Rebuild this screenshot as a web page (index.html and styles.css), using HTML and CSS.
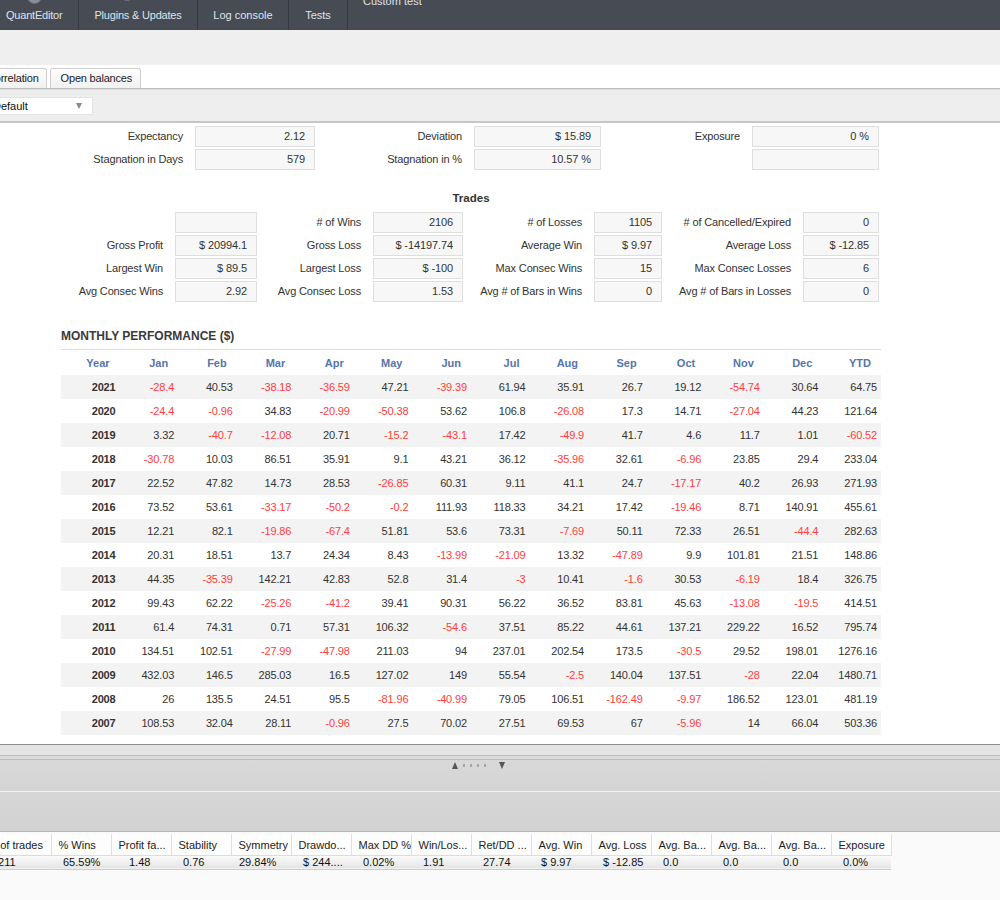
FILE: index.html
```html
<!DOCTYPE html>
<html>
<head>
<meta charset="utf-8">
<link rel="stylesheet" href="styles.css">
</head>
<body>
<div class="nav">
  <div class="navtab t1"><span class="nicon"></span>QuantEditor</div>
  <div class="navtab t2"><span class="nicon small"></span>Plugins &amp; Updates</div>
  <div class="navtab t3">Log console</div>
  <div class="navtab t4">Tests</div>
  <div class="navtab t5">Custom test</div>
</div>
<div class="band"></div>
<div class="tabstrip">
  <div class="tab tcor">Correlation</div>
  <div class="tab">Open balances</div>
</div>
<div class="toolbar">
  <div class="select"><span>Default</span><span class="arrow"></span></div>
</div>
<div class="content">
  <div class="stats">
    <div class="lbl">Expectancy</div><div class="box">2.12</div>
    <div class="lbl">Deviation</div><div class="box">$ 15.89</div>
    <div class="lbl">Exposure</div><div class="box">0 %</div>
    <div class="lbl">Stagnation in Days</div><div class="box">579</div>
    <div class="lbl">Stagnation in %</div><div class="box">10.57 %</div>
    <div class="lbl"></div><div class="box"></div>
  </div>
  <div class="trades-title">Trades</div>
  <div class="trades">
    <div class="lbl"></div><div class="box"></div>
    <div class="lbl"># of Wins</div><div class="box">2106</div>
    <div class="lbl"># of Losses</div><div class="box">1105</div>
    <div class="lbl"># of Cancelled/Expired</div><div class="box">0</div>
    <div class="lbl">Gross Profit</div><div class="box">$ 20994.1</div>
    <div class="lbl">Gross Loss</div><div class="box">$ -14197.74</div>
    <div class="lbl">Average Win</div><div class="box">$ 9.97</div>
    <div class="lbl">Average Loss</div><div class="box">$ -12.85</div>
    <div class="lbl">Largest Win</div><div class="box">$ 89.5</div>
    <div class="lbl">Largest Loss</div><div class="box">$ -100</div>
    <div class="lbl">Max Consec Wins</div><div class="box">15</div>
    <div class="lbl">Max Consec Losses</div><div class="box">6</div>
    <div class="lbl">Avg Consec Wins</div><div class="box">2.92</div>
    <div class="lbl">Avg Consec Loss</div><div class="box">1.53</div>
    <div class="lbl">Avg # of Bars in Wins</div><div class="box">0</div>
    <div class="lbl">Avg # of Bars in Losses</div><div class="box">0</div>
  </div>
  <div class="monthly">
    <div class="mtitle">MONTHLY PERFORMANCE ($)</div>
    <table class="mp">
      <thead>
        <tr><th>Year</th><th>Jan</th><th>Feb</th><th>Mar</th><th>Apr</th><th>May</th><th>Jun</th><th>Jul</th><th>Aug</th><th>Sep</th><th>Oct</th><th>Nov</th><th>Dec</th><th>YTD</th></tr>
      </thead>
      <tbody>
        <tr><td class="y">2021</td><td class="n">-28.4</td><td>40.53</td><td class="n">-38.18</td><td class="n">-36.59</td><td>47.21</td><td class="n">-39.39</td><td>61.94</td><td>35.91</td><td>26.7</td><td>19.12</td><td class="n">-54.74</td><td>30.64</td><td>64.75</td></tr>
        <tr><td class="y">2020</td><td class="n">-24.4</td><td class="n">-0.96</td><td>34.83</td><td class="n">-20.99</td><td class="n">-50.38</td><td>53.62</td><td>106.8</td><td class="n">-26.08</td><td>17.3</td><td>14.71</td><td class="n">-27.04</td><td>44.23</td><td>121.64</td></tr>
        <tr><td class="y">2019</td><td>3.32</td><td class="n">-40.7</td><td class="n">-12.08</td><td>20.71</td><td class="n">-15.2</td><td class="n">-43.1</td><td>17.42</td><td class="n">-49.9</td><td>41.7</td><td>4.6</td><td>11.7</td><td>1.01</td><td class="n">-60.52</td></tr>
        <tr><td class="y">2018</td><td class="n">-30.78</td><td>10.03</td><td>86.51</td><td>35.91</td><td>9.1</td><td>43.21</td><td>36.12</td><td class="n">-35.96</td><td>32.61</td><td class="n">-6.96</td><td>23.85</td><td>29.4</td><td>233.04</td></tr>
        <tr><td class="y">2017</td><td>22.52</td><td>47.82</td><td>14.73</td><td>28.53</td><td class="n">-26.85</td><td>60.31</td><td>9.11</td><td>41.1</td><td>24.7</td><td class="n">-17.17</td><td>40.2</td><td>26.93</td><td>271.93</td></tr>
        <tr><td class="y">2016</td><td>73.52</td><td>53.61</td><td class="n">-33.17</td><td class="n">-50.2</td><td class="n">-0.2</td><td>111.93</td><td>118.33</td><td>34.21</td><td>17.42</td><td class="n">-19.46</td><td>8.71</td><td>140.91</td><td>455.61</td></tr>
        <tr><td class="y">2015</td><td>12.21</td><td>82.1</td><td class="n">-19.86</td><td class="n">-67.4</td><td>51.81</td><td>53.6</td><td>73.31</td><td class="n">-7.69</td><td>50.11</td><td>72.33</td><td>26.51</td><td class="n">-44.4</td><td>282.63</td></tr>
        <tr><td class="y">2014</td><td>20.31</td><td>18.51</td><td>13.7</td><td>24.34</td><td>8.43</td><td class="n">-13.99</td><td class="n">-21.09</td><td>13.32</td><td class="n">-47.89</td><td>9.9</td><td>101.81</td><td>21.51</td><td>148.86</td></tr>
        <tr><td class="y">2013</td><td>44.35</td><td class="n">-35.39</td><td>142.21</td><td>42.83</td><td>52.8</td><td>31.4</td><td class="n">-3</td><td>10.41</td><td class="n">-1.6</td><td>30.53</td><td class="n">-6.19</td><td>18.4</td><td>326.75</td></tr>
        <tr><td class="y">2012</td><td>99.43</td><td>62.22</td><td class="n">-25.26</td><td class="n">-41.2</td><td>39.41</td><td>90.31</td><td>56.22</td><td>36.52</td><td>83.81</td><td>45.63</td><td class="n">-13.08</td><td class="n">-19.5</td><td>414.51</td></tr>
        <tr><td class="y">2011</td><td>61.4</td><td>74.31</td><td>0.71</td><td>57.31</td><td>106.32</td><td class="n">-54.6</td><td>37.51</td><td>85.22</td><td>44.61</td><td>137.21</td><td>229.22</td><td>16.52</td><td>795.74</td></tr>
        <tr><td class="y">2010</td><td>134.51</td><td>102.51</td><td class="n">-27.99</td><td class="n">-47.98</td><td>211.03</td><td>94</td><td>237.01</td><td>202.54</td><td>173.5</td><td class="n">-30.5</td><td>29.52</td><td>198.01</td><td>1276.16</td></tr>
        <tr><td class="y">2009</td><td>432.03</td><td>146.5</td><td>285.03</td><td>16.5</td><td>127.02</td><td>149</td><td>55.54</td><td class="n">-2.5</td><td>140.04</td><td>137.51</td><td class="n">-28</td><td>22.04</td><td>1480.71</td></tr>
        <tr><td class="y">2008</td><td>26</td><td>135.5</td><td>24.51</td><td>95.5</td><td class="n">-81.96</td><td class="n">-40.99</td><td>79.05</td><td>106.51</td><td class="n">-162.49</td><td class="n">-9.97</td><td>186.52</td><td>123.01</td><td>481.19</td></tr>
        <tr><td class="y">2007</td><td>108.53</td><td>32.04</td><td>28.11</td><td class="n">-0.96</td><td>27.5</td><td>70.02</td><td>27.51</td><td>69.53</td><td>67</td><td class="n">-5.96</td><td>14</td><td>66.04</td><td>503.36</td></tr>
      </tbody>
    </table>
  </div>
</div>
<div class="split">
  <div class="sp-a"></div>
  <div class="sp-b"></div>
  <div class="sp-c">
    <div class="grip"><span class="up"></span><span class="dot"></span><span class="dot"></span><span class="dot"></span><span class="dot"></span><span class="down"></span></div>
  </div>
  <div class="sp-d"></div>
</div>
<div class="bottom">
  <table class="res">
    <thead>
      <tr><th class="c1"># of trades</th><th>% Wins</th><th>Profit fa...</th><th>Stability</th><th>Symmetry</th><th>Drawdo...</th><th>Max DD %</th><th>Win/Los...</th><th>Ret/DD ...</th><th>Avg. Win</th><th>Avg. Loss</th><th>Avg. Ba...</th><th>Avg. Ba...</th><th>Avg. Ba...</th><th>Exposure</th></tr>
    </thead>
    <tbody>
      <tr><td class="c1">3211</td><td>65.59%</td><td class="p18">1.48</td><td>0.76</td><td class="p8">29.84%</td><td>$ 244....</td><td>0.02%</td><td>1.91</td><td>27.74</td><td class="p9">$ 9.97</td><td>$ -12.85</td><td>0.0</td><td>0.0</td><td>0.0</td><td>0.0%</td></tr>
    </tbody>
  </table>
</div>
</body>
</html>
```

FILE: styles.css
```css
html, body {
  margin: 0;
  padding: 0;
}
body {
  width: 1000px;
  height: 900px;
  overflow: hidden;
  font-family: "Liberation Sans", Arial, sans-serif;
  font-size: 11px;
  color: #333;
  background: #fafafa;
}

/* top navigation */
.nav {
  height: 30px;
  display: flex;
  background: #474b54;
  color: #dfe3ea;
  overflow: hidden;
}
.navtab {
  position: relative;
  box-sizing: border-box;
  padding-top: 9px;
  line-height: 13px;
  text-align: center;
  border-right: 1px solid #363940;
  white-space: nowrap;
}
.t1 { width: 79px; text-align: left; padding-left: 6px; letter-spacing: -0.2px; }
.t2 { width: 119px; letter-spacing: -0.2px; }
.t3 { width: 91px; }
.t4 { width: 59px; }
.t5 { border-right: none; padding: 0 0 0 15px; margin-top: -5px; text-align: left; }
.nicon {
  position: absolute;
  left: 27px;
  top: -11px;
  width: 15px;
  height: 15px;
  border-radius: 50%;
  background: #8b8f96;
  border: 1px solid #6a6e75;
  box-sizing: border-box;
}
.nicon.small {
  left: 44px;
  top: -13px;
  width: 8px;
  height: 14px;
  border-radius: 3px;
  background: #777b82;
}

.band {
  height: 35px;
  background: #efefef;
}

/* tab strip */
.tabstrip {
  height: 23px;
  background: #fff;
  border-bottom: 1px solid #bdbdbd;
  display: flex;
  align-items: flex-end;
  gap: 3px;
  overflow: hidden;
}
.tab {
  height: 20px;
  box-sizing: border-box;
  line-height: 19px;
  padding: 0 8px 0 10px;
  border: 1px solid #cfcfcf;
  border-bottom: none;
  border-radius: 3px 3px 0 0;
  background: linear-gradient(#fdfdfd, #f1f1f1);
  color: #222;
  white-space: nowrap;
  letter-spacing: -0.2px;
}
.tcor {
  margin-left: -24px;
  padding-right: 7px;
}

/* toolbar */
.toolbar {
  box-sizing: border-box;
  padding-top: 7px;
  background: #eeeeee;
  border-top: 1px solid #dedede;
  border-bottom: 2px solid #c6c6c6;
  height: 34px;
}
.select {
  margin-left: -12px;
  width: 105px;
  height: 18px;
  box-sizing: border-box;
  background: #fff;
  border: 1px solid #e2e2e2;
  padding-left: 4px;
  line-height: 16px;
  color: #111;
  display: flex;
  align-items: center;
  justify-content: space-between;
  padding-right: 10px;
}
.arrow {
  width: 0;
  height: 0;
  border-left: 3px solid transparent;
  border-right: 3px solid transparent;
  border-top: 6px solid #8a8a8a;
}

/* content */
.content {
  height: 621px;
  background: #fff;
  padding-top: 3px;
  box-sizing: border-box;
  overflow: hidden;
}
.stats {
  display: grid;
  grid-template-columns: 183px 120px 135px 127px 127px 127px;
  column-gap: 12px;
  row-gap: 2px;
}
.trades {
  display: grid;
  grid-template-columns: 163px 82px 92px 90px 107px 68px 117px 76px;
  column-gap: 12px;
  row-gap: 2px;
}
.lbl {
  text-align: right;
  line-height: 21px;
  height: 21px;
  white-space: nowrap;
  letter-spacing: -0.15px;
}
.box {
  height: 21px;
  box-sizing: border-box;
  border: 1px solid #dedede;
  background: #f7f7f7;
  text-align: right;
  padding-right: 9px;
  line-height: 19px;
  white-space: nowrap;
  letter-spacing: -0.1px;
}
.trades-title {
  width: 942px;
  text-align: center;
  font-weight: bold;
  font-size: 11.5px;
  line-height: 14px;
  margin-top: 21px;
  margin-bottom: 7px;
  color: #333;
}

/* monthly */
.monthly {
  margin: 27px 0 0 61px;
  width: 820px;
}
.mtitle {
  font-weight: bold;
  font-size: 12px;
  line-height: 14px;
  color: #3a3a3a;
  padding-bottom: 6px;
  border-bottom: 1px solid #dcdcdc;
}
.mp {
  width: 820px;
  border-collapse: collapse;
  table-layout: fixed;
}
.mp th {
  height: 25px;
  padding: 0 10px 0 0;
  text-align: right;
  color: #5475ad;
  font-weight: bold;
}
.mp td {
  height: 24px;
  padding: 0 4px 0 0;
  text-align: right;
  white-space: nowrap;
  letter-spacing: -0.15px;
}
.mp tbody tr:nth-child(odd) td {
  background: #f3f3f3;
}
.mp td.y {
  font-weight: bold;
}
.mp td.n {
  color: #ff3d3d;
}

/* splitter */
.split {
  background: #fff;
}
.sp-a {
  height: 10px;
  background: #e4e4e4;
  border-top: 1px solid #8e8e8e;
  border-bottom: 1px solid #bdbdbd;
}
.sp-b {
  height: 3px;
  background: #dadada;
  border-bottom: 1px solid #bdbdbd;
}
.sp-c {
  height: 31px;
  background: linear-gradient(#d8d8d8, #d4d4d4);
  border-bottom: 1px solid #f4f4f4;
  display: flex;
  justify-content: center;
}
.grip {
  display: flex;
  align-items: center;
  height: 8px;
  margin-top: 1px;
  margin-left: -43px;
}
.grip .up {
  width: 0;
  height: 0;
  border-left: 3px solid transparent;
  border-right: 3px solid transparent;
  border-bottom: 7px solid #555;
  margin-right: 5px;
}
.grip .down {
  width: 0;
  height: 0;
  border-left: 3px solid transparent;
  border-right: 3px solid transparent;
  border-top: 7px solid #555;
  margin-left: 13px;
}
.grip .dot {
  width: 2px;
  height: 3px;
  background: #a6a6a6;
  margin-right: 5px;
}
.grip .dot:nth-child(5) {
  margin-right: 0;
}
.sp-d {
  height: 39px;
  background: linear-gradient(#d6d6d6, #d2d2d2);
  border-bottom: 1px solid #b6b6b6;
  margin-bottom: 2px;
}

/* bottom results table */
.bottom {
  background: #fafafa;
  height: 70px;
  overflow: hidden;
}
.res {
  border-collapse: collapse;
  table-layout: fixed;
  width: 907px;
  margin-left: -16px;
}
.res th, .res td {
  width: 60px;
  box-sizing: border-box;
  white-space: nowrap;
  overflow: hidden;
  text-align: left;
  font-weight: normal;
}
.res .c1 {
  width: 67px;
}
.res th {
  height: 21px;
  padding: 2px 0 0 7px;
  background: #fdfdfd;
  border-right: 1px solid #dfdfdf;
  border-bottom: 1px solid #dcdcdc;
  color: #222;
}
.res th.c1 {
  padding-left: 7px;
}
.res td {
  height: 14px;
  line-height: 13px;
  padding: 0 0 0 12px;
  background: linear-gradient(#fbfbfb, #e4e4e4);
  border-bottom: 1px solid #cdcdcd;
  color: #111;
}
.res td.c1 {
  padding-left: 8px;
}
.res td.p18 { padding-left: 18px; }
.res td.p8 { padding-left: 8px; }
.res td.p9 { padding-left: 10px; }
```
